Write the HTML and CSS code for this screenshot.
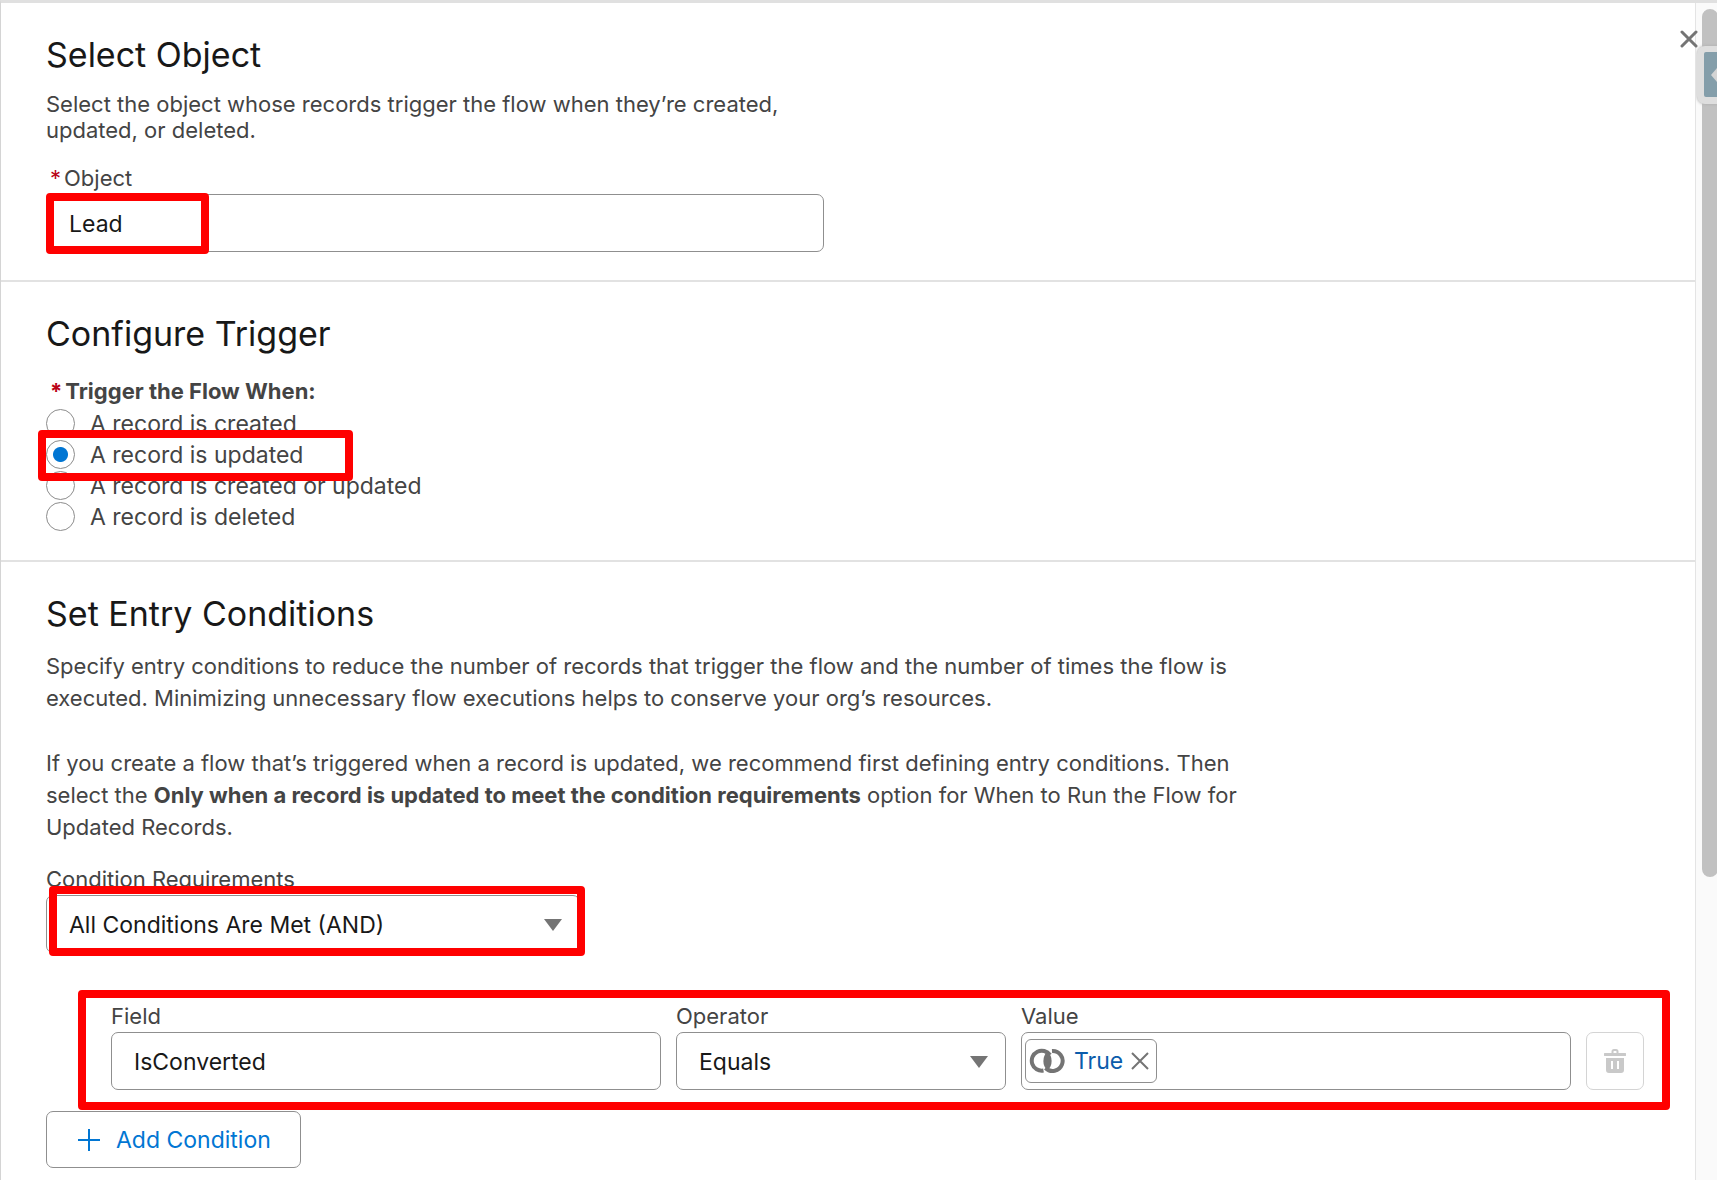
FILE: index.html
```
<!DOCTYPE html>
<html lang="en">

<head>
    <meta charset="UTF-8">
    <meta name="viewport" content="width=device-width, initial-scale=1.0">
    <title>Configure Start</title>
    <link rel="stylesheet" href="styles.css">
</head>

<body>
    <div class="modal">
        <main class="content">
            <section class="section">
                <h2>Select Object</h2>
                <p class="intro">Select the object whose records trigger the flow when they’re created, updated, or deleted.</p>
                <label class="label required" for="object"><span class="star">*</span>Object</label>
                <div class="control object-control">
                    <input class="box" type="text" id="object" value="Lead">
                    <span class="highlight highlight-object"></span>
                </div>
            </section>

            <section class="section">
                <h2>Configure Trigger</h2>
                <fieldset class="radios">
                    <legend class="label required"><span class="star">*</span>Trigger the Flow When:</legend>
                    <label class="radio"><input type="radio" name="trigger">A record is created</label>
                    <label class="radio"><input type="radio" name="trigger" checked>A record is updated<span class="highlight highlight-radio"></span></label>
                    <label class="radio"><input type="radio" name="trigger">A record is created or updated</label>
                    <label class="radio"><input type="radio" name="trigger">A record is deleted</label>
                </fieldset>
            </section>

            <section class="section">
                <h2>Set Entry Conditions</h2>
                <div class="help">
                    <p>Specify entry conditions to reduce the number of records that trigger the flow and the number of times the flow is executed. Minimizing unnecessary flow executions helps to conserve your org’s resources.</p>
                    <p>If you create a flow that’s triggered when a record is updated, we recommend first defining entry conditions. Then select the <b>Only when a record is updated to meet the condition requirements</b> option for When to Run the Flow for Updated Records.</p>
                </div>
                <label class="label" for="logic">Condition Requirements</label>
                <div class="control dropdown logic-control">
                    <select class="box" id="logic">
                        <option>All Conditions Are Met (AND)</option>
                    </select>
                    <span class="highlight highlight-logic"></span>
                </div>

                <div class="condition">
                    <div class="col-wide">
                        <label class="label" for="field">Field</label>
                        <div class="control">
                            <input class="box" type="text" id="field" value="IsConverted">
                        </div>
                    </div>
                    <div class="col-narrow">
                        <label class="label" for="operator">Operator</label>
                        <div class="control dropdown">
                            <select class="box" id="operator">
                                <option>Equals</option>
                            </select>
                        </div>
                    </div>
                    <div class="col-wide">
                        <label class="label" for="value">Value</label>
                        <div class="control box value-box">
                            <span class="pill">
                                <svg class="icon-toggle" viewBox="0 0 37 26">
                                    <path d="M14.500 22.500A10 10 0 1 1 21 7" />
                                    <path d="M23 3a10 10 0 1 1-6.500 17" />
                                    <path class="lens" d="M18.500 3.500a13 13 0 0 1 0 19a13 13 0 0 1 0-19z" />
                                </svg>
                                <a href="#">True</a>
                                <button class="pill-remove" type="button" aria-label="Remove">
                                    <svg viewBox="0 0 18 18"><path d="M1 1l16 16M17 1L1 17" /></svg>
                                </button>
                            </span>
                            <input class="value-input" type="text" id="value">
                        </div>
                    </div>
                    <button class="delete" type="button" aria-label="Delete condition" disabled>
                        <svg viewBox="0 0 22 26">
                            <path d="M1 5h20a1 1 0 0 1 0 3H1a1 1 0 0 1 0-3z" />
                            <path class="handle" d="M8.500 6V3.500a1.500 1.500 0 0 1 1.500-1.500h2a1.500 1.500 0 0 1 1.500 1.500V6" />
                            <path fill-rule="evenodd" d="M2 10h18v12a3 3 0 0 1-3 3H5a3 3 0 0 1-3-3zM7 13v8h2v-8zM13 13v8h2v-8z" />
                        </svg>
                    </button>
                    <span class="highlight highlight-condition"></span>
                </div>

                <button class="add" type="button">
                    <svg viewBox="0 0 22 22"><path d="M11 0v22M0 11h22" /></svg>
                    Add Condition
                </button>
            </section>
        </main>

        <aside class="scroll">
            <div class="thumb"></div>
            <div class="side-tab">
                <svg viewBox="0 0 13 45"><path d="M13 16v14l-6-7z" /></svg>
            </div>
        </aside>

        <button class="close" type="button" aria-label="Close">
            <svg viewBox="0 0 18 18"><path d="M2 2l14 14M16 2L2 16" /></svg>
        </button>
    </div>
</body>

</html>
```
FILE: styles.css
```
* {
    box-sizing: border-box;
}

body {
    margin: 0;
    font-family: Inter, "Liberation Sans", sans-serif;
    font-size: 22px;
    line-height: 26px;
    color: #444;
    background-color: #fff;
    overflow: hidden;
}

.modal {
    position: relative;
    display: flex;
    min-height: 100vh;
    border-top: 3px solid #e0e0e0;
    border-left: 1px solid #d4d4d4;
}

.content {
    flex: 1;
}

/* Sections */
.section {
    padding: 30px 51px 28px 45px;
    border-bottom: 2px solid #e2e2e2;
}

.section:last-child {
    border-bottom: none;
    padding-bottom: 0;
}

h2 {
    margin: 0 0 14px;
    font-size: 34px;
    font-weight: 400;
    line-height: 44px;
    color: #181818;
}

.intro {
    max-width: 778px;
    margin: 0 0 22px;
}

.help {
    max-width: 1230px;
    margin-bottom: 23px;
    line-height: 32px;
}

.help p {
    margin: 0 0 33px;
}

.help p:last-child {
    margin-bottom: 0;
}

.label {
    display: block;
    width: fit-content;
    margin-bottom: 3px;
    padding: 0;
}

.star {
    margin-right: 3px;
    color: #ba0517;
}

.required {
    padding-left: 4px;
}

/* Inputs */
.control {
    position: relative;
}

.object-control {
    max-width: 778px;
}

.logic-control {
    max-width: 534px;
}

.box {
    display: block;
    width: 100%;
    height: 58px;
    padding: 2px 22px 0;
    border: 1px solid #8f8f8f;
    border-radius: 7px;
    background-color: #fff;
    font-family: inherit;
    font-size: 23px;
    color: #181818;
    outline: none;
}

select.box {
    appearance: none;
}

.dropdown::after {
    content: "";
    position: absolute;
    right: 18px;
    top: 24px;
    border: 9px solid transparent;
    border-top: 12px solid #747474;
    border-bottom: none;
    pointer-events: none;
}

/* Radio group */
.radios {
    margin: 0;
    padding: 0;
    border: none;
}

.radios .label {
    margin-bottom: 4px;
    padding-top: 8px;
    font-weight: 700;
}

.radio {
    position: relative;
    display: flex;
    align-items: center;
    gap: 15px;
    width: fit-content;
    height: 31px;
    font-size: 23px;
}

.radio input {
    appearance: none;
    width: 29px;
    height: 29px;
    margin: 0;
    border: 1px solid #8c8c8c;
    border-radius: 50%;
    background-color: #fff;
}

.radio input:checked {
    background: radial-gradient(circle, #0176d3 7px, #fff 8px);
}

/* Condition row */
.condition {
    position: relative;
    display: flex;
    align-items: flex-end;
    gap: 15px;
    margin: 50px 0 21px 65px;
}

.col-wide {
    flex: 5;
}

.col-narrow {
    flex: 3;
}

.value-box {
    display: flex;
    align-items: center;
    padding: 0 3px;
}

.pill {
    display: flex;
    align-items: center;
    gap: 8px;
    height: 44px;
    padding: 0 7px 0 3px;
    border: 1px solid #8f8f8f;
    border-radius: 6px;
}

.pill a {
    color: #0b5cab;
    text-decoration: none;
}

.icon-toggle {
    width: 37px;
    height: 26px;
    fill: none;
    stroke: #747474;
    stroke-width: 4;
}

.icon-toggle .lens {
    fill: #747474;
    stroke: none;
}

.pill-remove {
    display: flex;
    padding: 0;
    border: none;
    background: none;
}

.pill-remove svg {
    width: 18px;
    height: 18px;
    stroke: #747474;
    stroke-width: 2;
}

.value-input {
    flex: 1;
    min-width: 0;
    height: 44px;
    border: none;
    outline: none;
    font: inherit;
}

.delete {
    display: flex;
    align-items: center;
    justify-content: center;
    width: 58px;
    height: 58px;
    padding: 0;
    border: 1px solid #d4d4d4;
    border-radius: 7px;
    background-color: #fff;
}

.delete svg {
    width: 22px;
    height: 26px;
    fill: #c9c9c9;
}

.delete .handle {
    fill: none;
    stroke: #c9c9c9;
    stroke-width: 2;
}

.add {
    display: flex;
    align-items: center;
    gap: 16px;
    height: 57px;
    padding: 0 29px 0 31px;
    border: 1px solid #8f8f8f;
    border-radius: 7px;
    background-color: #fff;
    font-family: inherit;
    font-size: 23px;
    color: #0176d3;
}

.add svg {
    width: 22px;
    height: 22px;
    stroke: #0176d3;
    stroke-width: 2;
}

/* Red marker frames over the form */
.highlight {
    position: absolute;
    z-index: 1;
    border: 8px solid #f00;
    border-radius: 4px;
    pointer-events: none;
}

.highlight-object {
    left: 0;
    top: -1px;
    width: 163px;
    height: 61px;
}

.highlight-radio {
    left: -8px;
    top: -9px;
    width: 315px;
    height: 51px;
}

.highlight-logic {
    left: 3px;
    top: -9px;
    right: -5px;
    height: 70px;
}

.highlight-condition {
    left: -33px;
    right: -26px;
    top: -13px;
    bottom: -20px;
}

/* Right edge */
.scroll {
    position: relative;
    width: 22px;
    padding: 6px 0 0 6px;
    border-left: 1px solid #e4e4e4;
    background-color: #fafafa;
    overflow: hidden;
}

.thumb {
    width: 16px;
    height: 868px;
    max-height: 90vh;
    border-radius: 8px;
    background-color: #c1c1c1;
}

.side-tab {
    position: absolute;
    left: 1px;
    top: 43px;
    width: 30px;
    height: 58px;
    padding: 6px 0 0 7px;
    border-radius: 8px;
    background-color: #dedede;
    box-shadow: 0 0 3px #aaa;
}

.side-tab svg {
    display: block;
    width: 13px;
    height: 45px;
    border-radius: 2px 0 0 2px;
    background-color: #849eaa;
    fill: #d4d4d4;
}

.close {
    position: absolute;
    right: 19px;
    top: 27px;
    display: flex;
    padding: 0;
    border: none;
    background: none;
}

.close svg {
    width: 18px;
    height: 18px;
    stroke: #747474;
    stroke-width: 3;
    stroke-linecap: round;
}
```
